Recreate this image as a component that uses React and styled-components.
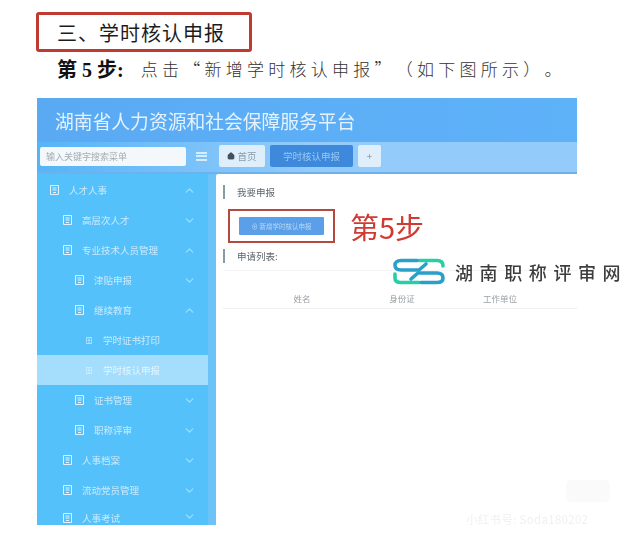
import React from 'react';
import styled, { createGlobalStyle } from 'styled-components';
import { ChevronUp, ChevronDown, Home } from 'lucide-react';

const CJK = `"Noto Sans CJK SC", "Noto Sans", sans-serif`;

const GlobalStyle = createGlobalStyle`
  html, body { margin: 0; padding: 0; background: #ffffff; }
  body { font-family: ${CJK}; overflow: hidden; }
  * { box-sizing: border-box; }
`;

const Page = styled.div`
  position: relative;
  width: 630px;
  height: 540px;
  padding: 12px 0 0 36px;
  overflow: hidden;
`;

const SectionBox = styled.div`
  width: 216px;
  height: 40px;
  border: 3px solid #bf3a30;
  border-radius: 3px;
  padding-left: 18px;
  display: flex;
  align-items: center;
  font-size: 20px;
  letter-spacing: 1px;
  color: #1c1c1c;
`;

const StepLine = styled.div`
  height: 32px;
  margin-bottom: 14px;
  padding-left: 21px;
  display: flex;
  align-items: center;
  font-size: 17px;
  white-space: nowrap;
  color: #333;
`;

const StepLabel = styled.b`
  font-family: "Liberation Serif", ${CJK};
  font-size: 20px;
  color: #111;
  margin-right: 17px;
`;

const StepText = styled.span`
  letter-spacing: 4.25px;
  font-weight: 300;
  text-spacing-trim: space-all;
`;

const Platform = styled.div`
  width: 540px;
  height: 427px;
  margin-left: 1px;
  overflow: hidden;
  filter: blur(0.7px);
  background: #ffffff;
`;

const Header = styled.div`
  height: 44px;
  padding-left: 18px;
  display: flex;
  align-items: center;
  background: linear-gradient(90deg, #5aaaf3, #5eb2f8);
  color: #e4f2ff;
  font-size: 18.8px;
`;

const Toolbar = styled.div`
  height: 32px;
  padding: 0 0 2px 3px;
  display: flex;
  align-items: center;
  background: linear-gradient(90deg, #55b4f8, #93cbfa 50%, #93cbfa);
  border-bottom: 2px solid #6fb0ee;
`;

const SearchBox = styled.div`
  width: 146px;
  height: 19px;
  padding-left: 6px;
  display: flex;
  align-items: center;
  background: #f5f8fb;
  border-radius: 2px;
  font-size: 9px;
  color: #a3adb4;
`;

const Burger = styled.div`
  width: 11px;
  height: 9px;
  margin: 0 12px 0 10px;
  border-top: 2px solid #d6edfd;
  border-bottom: 2px solid #d6edfd;
  &::after {
    content: '';
    display: block;
    height: 2px;
    margin-top: 1.5px;
    background: #d6edfd;
  }
`;

const Tab = styled.div`
  height: 22px;
  margin-right: 5px;
  width: ${p => p.$w}px;
  border-radius: 2px;
  display: flex;
  align-items: center;
  justify-content: center;
  gap: 2px;
  font-size: 9.5px;
  background: ${p => (p.$active ? '#3f89dc' : '#dfeefb')};
  color: ${p => (p.$active ? '#97c8f3' : '#8b9aa8')};
`;

const Body = styled.div`
  display: flex;
  height: 351px;
  background: #55bff9;
`;

const Sidebar = styled.div`
  width: 171px;
  padding-top: 1px;
  background: #55c1fb;
`;

const SideEdge = styled.div`
  width: 8px;
  background: #6cc3f8;
`;

const SideRow = styled.div`
  height: 30px;
  padding-left: ${p => p.$indent}px;
  padding-right: 12px;
  display: flex;
  align-items: center;
  font-size: 9.5px;
  color: ${p => (p.$active ? '#e3f6fe' : '#c9eafd')};
  background: ${p => (p.$active ? '#a4defc' : 'transparent')};

  &:last-child {
    height: 20px;
    padding-bottom: 2px;
    align-items: flex-end;
  }
`;

const SideLabel = styled.span`
  flex: 1;
  line-height: 10px;
  margin-left: ${p => (p.$small ? 11 : 10)}px;
`;

const Main = styled.div`
  flex: 1;
  background: #ffffff;
  border-top-left-radius: 2px;
  padding: 11px 0 0 7px;
`;

const SectionTitle = styled.div`
  height: 14px;
  border-left: 2px solid #8c9aa3;
  padding-left: 12px;
  display: flex;
  align-items: center;
  font-size: 9.5px;
  color: #5e666c;
`;

const ActionRow = styled.div`
  display: flex;
  align-items: center;
  margin: 10px 0 6px 5px;
`;

const ActionFrame = styled.div`
  width: 107px;
  height: 34px;
  border: 2px solid #b5483f;
  display: flex;
  align-items: center;
  justify-content: center;
`;

const AddButton = styled.div`
  width: 85px;
  height: 18px;
  background: #5b9fe8;
  border-radius: 1px;
  display: flex;
  align-items: center;
  justify-content: center;
  gap: 2px;
  font-size: 6.5px;
  color: #b8d8f5;
`;

const StepMark = styled.div`
  margin-left: 15px;
  font-size: 29px;
  line-height: 34px;
  color: #cf3a32;
`;

const TableHead = styled.div`
  margin-top: 7px;
  height: 39px;
  padding: 17px 0 0 25px;
  display: grid;
  grid-template-columns: 108px 92px 104px;
  align-items: center;
  border-top: 1px solid #f3f4f5;
  border-bottom: 1px solid #eef0f1;
  font-size: 8.5px;
  color: #9aa0a5;
  span { text-align: center; }
`;

const BrandMark = styled.div`
  position: absolute;
  left: 393px;
  top: 258px;
  display: flex;
  align-items: center;
  gap: 10px;
`;

const BrandText = styled.div`
  font-size: 18px;
  font-weight: 500;
  letter-spacing: 6.6px;
  color: #3d3d3d;
  white-space: nowrap;
  filter: blur(0.4px);
`;

const FaintBadge = styled.div`
  position: absolute;
  left: 566px;
  top: 480px;
  width: 44px;
  height: 22px;
  border-radius: 5px;
  background: #fafafa;
`;

const FaintText = styled.div`
  position: absolute;
  left: 466px;
  top: 511px;
  font-size: 11.5px;
  letter-spacing: 0.3px;
  color: #f0f0f0;
  filter: blur(0.7px);
  white-space: nowrap;
`;

const MenuIcon = ({ size = 9 }) => (
  <svg width={size} height={size + 1} viewBox="0 0 9 10" fill="none" stroke="#e0f3fe" strokeWidth="1">
    <path d="M.5.5h8v9h-8zM2.500 3h4M2.500 5h4M3 7.500h3" />
  </svg>
);

const Logo = () => (
  <svg width="52" height="27" viewBox="0 0 52 27" fill="none" strokeWidth="3.6" strokeLinecap="round">
    <path d="M26 2.500H44C48 2.500 50 4.500 50 8" stroke="#27cfa6" />
    <path d="M2 16V20C2 23 4 24.500 8 24.500H26" stroke="#27cfa6" />
    <path d="M24 2.500H8C4 2.500 2 4.500 2 7c0 3 2 5 6 5H26L33 6" stroke="#2aa0c8" />
    <path d="M18 21L25 15H44C48 15 50 17 50 20c0 3-2 4.500-6 4.500H28" stroke="#2aa0c8" />
  </svg>
);

const menu = [
  { label: '人才人事', indent: 13, open: true },
  { label: '高层次人才', indent: 26, open: false },
  { label: '专业技术人员管理', indent: 26, open: true },
  { label: '津贴申报', indent: 38, open: false },
  { label: '继续教育', indent: 38, open: true },
  { label: '学时证书打印', indent: 49, leaf: true },
  { label: '学时核认申报', indent: 49, leaf: true, active: true },
  { label: '证书管理', indent: 38, open: false },
  { label: '职称评审', indent: 38, open: false },
  { label: '人事档案', indent: 26, open: false },
  { label: '流动党员管理', indent: 26, open: false },
  { label: '人事考试', indent: 26, open: false },
];

export default function App() {
  return (
    <Page>
      <GlobalStyle />
      <SectionBox>三、学时核认申报</SectionBox>
      <StepLine>
        <StepLabel>第 5 步:</StepLabel>
        <StepText>点击“新增学时核认申报”（如下图所示）。</StepText>
      </StepLine>
      <Platform>
        <Header>湖南省人力资源和社会保障服务平台</Header>
        <Toolbar>
          <SearchBox>输入关键字搜索菜单</SearchBox>
          <Burger />
          <Tab $w={46}><Home size={8} fill="#44505c" stroke="#44505c" />首页</Tab>
          <Tab $w={83} $active>学时核认申报</Tab>
          <Tab $w={23}>+</Tab>
        </Toolbar>
        <Body>
          <Sidebar>
            {menu.map(item => (
              <SideRow key={item.label} $indent={item.indent} $active={item.active}>
                <MenuIcon size={item.leaf ? 6 : 9} />
                <SideLabel $small={item.leaf}>{item.label}</SideLabel>
                {!item.leaf && (item.open
                  ? <ChevronUp size={13} color="#a5dffc" />
                  : <ChevronDown size={13} color="#a5dffc" />)}
              </SideRow>
            ))}
          </Sidebar>
          <SideEdge />
          <Main>
            <SectionTitle>我要申报</SectionTitle>
            <ActionRow>
              <ActionFrame>
                <AddButton>⊕ 新增学时核认申报</AddButton>
              </ActionFrame>
              <StepMark>第5步</StepMark>
            </ActionRow>
            <SectionTitle>申请列表:</SectionTitle>
            <TableHead>
              <span>姓名</span>
              <span>身份证</span>
              <span>工作单位</span>
            </TableHead>
          </Main>
        </Body>
      </Platform>
      <BrandMark>
        <Logo />
        <BrandText>湖南职称评审网</BrandText>
      </BrandMark>
      <FaintBadge />
      <FaintText>小红书号: Soda180202</FaintText>
    </Page>
  );
}
